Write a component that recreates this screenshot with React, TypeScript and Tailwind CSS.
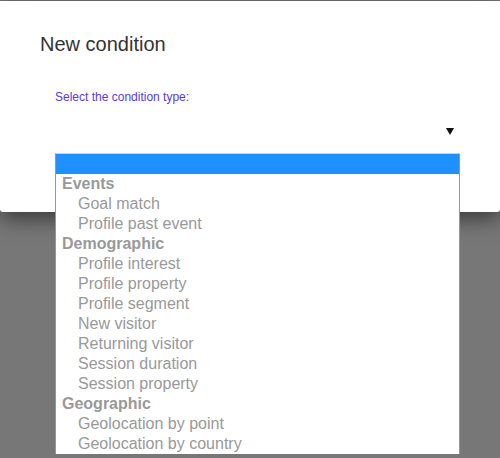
const groups = [
  { label: 'Events', items: ['Goal match', 'Profile past event'] },
  {
    label: 'Demographic',
    items: [
      'Profile interest',
      'Profile property',
      'Profile segment',
      'New visitor',
      'Returning visitor',
      'Session duration',
      'Session property',
    ],
  },
  { label: 'Geographic', items: ['Geolocation by point', 'Geolocation by country'] },
];

export default function App() {
  return (
    <div
      className="relative h-[458px] w-[500px] overflow-hidden bg-[#777777] pt-px"
      style={{ fontFamily: '"Liberation Sans", Arial, sans-serif' }}
    >
      {/* Modal */}
      <div className="h-[211px] rounded-b-[3px] bg-white shadow-[0_6px_22px_rgba(0,0,0,0.55)]">
        <h1 className="pl-10 pt-[31px] text-[20px] leading-6 text-[#333]">New condition</h1>
        <div className="pl-[55px] pr-[46px] pt-[34px]">
          <label className="block text-[12px] leading-[14px] text-[#5b3ad0]">
            Select the condition type:
          </label>
          <div className="mt-[17px] flex h-5 items-center justify-end">
            <svg width="8" height="7" viewBox="0 0 8 7">
              <path d="M0 0h8L4 7z" fill="#111" />
            </svg>
          </div>
        </div>
      </div>

      {/* Open dropdown list */}
      <div className="absolute left-[55px] top-[153px] w-[405px] border-x border-t border-x-[#7f9db9] border-t-[#cfcfcf] bg-white">
        <div className="h-5 bg-[#1e90ff]" />
        {groups.map((g) => (
          <div key={g.label}>
            <div className="h-5 pl-[6px] text-[16px] font-bold leading-[19px] text-[#999]">{g.label}</div>
            {g.items.map((it) => (
              <div key={it} className="h-5 pl-[22px] text-[16px] leading-[19px] text-[#999]">
                {it}
              </div>
            ))}
          </div>
        ))}
      </div>
    </div>
  );
}
